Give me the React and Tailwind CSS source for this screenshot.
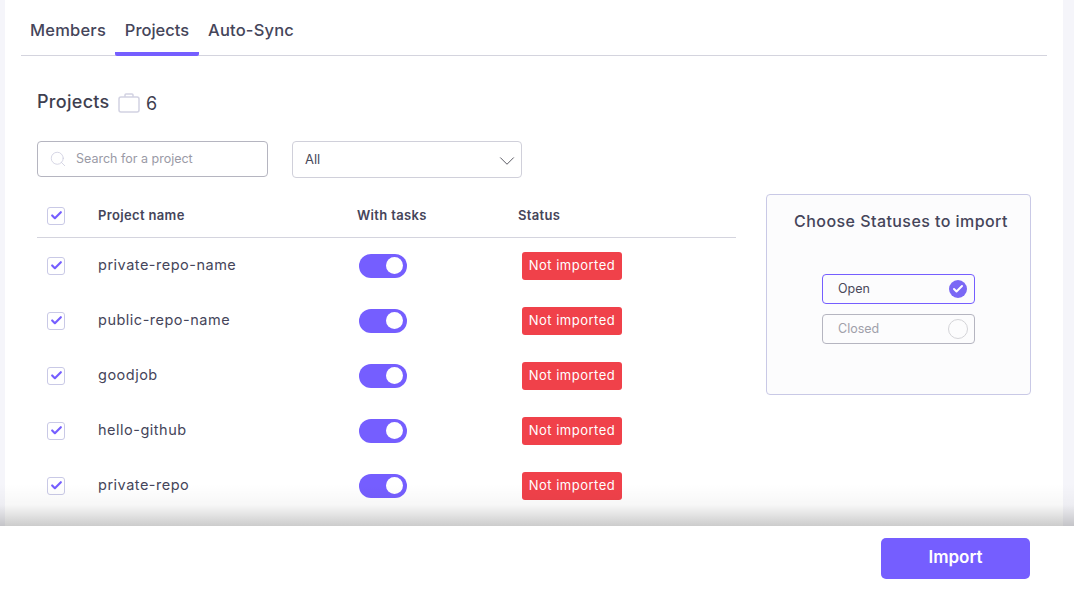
import React from 'react';
import { ChevronDown, Search, Check } from 'lucide-react';

const projects = ['private-repo-name', 'public-repo-name', 'goodjob', 'hello-github', 'private-repo'];

const CheckBox = () => (
    <div className="w-[18px] h-[18px] rounded-[3px] border border-[#c9c9e6] bg-white flex items-center justify-center">
        <Check size={13} strokeWidth={4} className="text-[#755eff]" />
    </div>
);

const Toggle = () => (
    <div className="w-12 h-6 rounded-full bg-[#755eff] flex items-center justify-end pr-1">
        <div className="w-[17px] h-[17px] rounded-full bg-white" />
    </div>
);

const StatusOption = ({ label, active }) => (
    <div className={`w-[153px] h-[30px] rounded-[4px] border flex items-center justify-between pl-[15px] pr-[6px] text-[12.5px] ${
        active ? 'border-[#755eff] text-[#4a4a5a]' : 'border-[#b5b5c0] text-[#a0a0aa]'
    }`}>
        <span>{label}</span>
        {active ? (
            <div className="w-[18px] h-[18px] rounded-full bg-[#7a68f5] flex items-center justify-center mr-[1px]">
                <Check size={12} strokeWidth={4} className="text-white" />
            </div>
        ) : (
            <div className="w-5 h-5 rounded-full border border-[#d4d4d8]" />
        )}
    </div>
);

const App = () => {
    return (
        <div className="w-[1074px] h-[590px] bg-white overflow-hidden flex flex-col font-['Inter',sans-serif] text-[#45455a]">
            <div className="relative h-[526px] flex-none bg-[#f5f5fa] px-[5px] overflow-hidden">
                <div className="bg-white h-[600px] w-[1058px] px-4">
                    <div className="h-[56px] border-b border-[#d4d4de] flex items-start text-[16.5px] font-medium tracking-[0.2px]">
                        <div className="w-[94px] pl-[9px] pt-[18px]">Members</div>
                        <div className="w-[84px] h-[56px] pt-[18px] text-center border-b-4 border-[#755eff] rounded-b-[2px] tracking-normal">Projects</div>
                        <div className="pl-[9px] pt-[18px]">Auto-Sync</div>
                    </div>

                    <div className="pl-4 pr-4">
                        <div className="flex items-center h-[28px] mt-[33px] text-[#3f3f50]">
                            <span className="text-[18px] font-medium w-[81px] tracking-[0.3px] pb-1">Projects</span>
                            <svg width="22" height="20" viewBox="0 0 22 20" fill="none" stroke="#d2d2e2" strokeWidth="1.5">
                                <rect x="1" y="4" width="20" height="15" rx="2" />
                                <path d="M7 4V2a1 1 0 0 1 1-1h6a1 1 0 0 1 1 1v2" />
                            </svg>
                            <span className="text-[18px] ml-[6px]">6</span>
                        </div>

                        <div className="flex gap-6 mt-6">
                            <div className="w-[231px] h-9 rounded-[4px] border border-[#b5b5c0] flex items-center pl-3 text-[12.5px] text-[#9a9aa6]">
                                <Search size={18} strokeWidth={1} className="text-[#c9c9dc] -ml-px mr-[9px]" />
                                <span>Search for a project</span>
                            </div>
                            <div className="w-[230px] h-[37px] rounded-[4px] border border-[#d0d0da] flex items-center justify-between pl-3 pr-px text-[13px] text-[#4a4a5a]">
                                <span>All</span>
                                <ChevronDown size={26} strokeWidth={0.9} className="text-[#55555f] mt-[3px]" />
                            </div>
                        </div>

                        <div className="flex items-start gap-[30px] mt-4">
                            <div className="w-[699px] flex-none">
                                <div className="h-[44px] flex items-center border-b border-[#d4d4de] text-[13px] font-semibold tracking-[0.35px]">
                                    <div className="w-[61px] pl-[10px]"><CheckBox /></div>
                                    <div className="w-[259px]">Project name</div>
                                    <div className="w-[161px]">With tasks</div>
                                    <div>Status</div>
                                </div>
                                {projects.map((name) => (
                                    <div key={name} className="h-[55px] flex items-center text-[14.5px] tracking-[0.5px]">
                                        <div className="w-[61px] pl-[10px]"><CheckBox /></div>
                                        <div className="w-[261px] pb-[2px]">{name}</div>
                                        <div className="w-[163px]"><Toggle /></div>
                                        <div className="w-[100px] h-7 rounded-[3px] bg-[#f0414a] text-white text-[13px] tracking-[0.5px] flex items-center justify-center">
                                            Not imported
                                        </div>
                                    </div>
                                ))}
                            </div>

                            <div className="w-[265px] h-[201px] flex-none rounded-[4px] border border-[#c9c9e6] bg-[#fcfcfd] flex flex-col items-center">
                                <div className="mt-[14px] pl-[5px] text-[16px] font-medium tracking-[0.44px]">Choose Statuses to import</div>
                                <div className="mt-[41px] flex flex-col gap-[10px]">
                                    <StatusOption label="Open" active />
                                    <StatusOption label="Closed" />
                                </div>
                            </div>
                        </div>
                    </div>
                </div>
                <div className="absolute left-0 right-0 bottom-0 h-[42px] bg-gradient-to-b from-[#00000000] via-[#00000008] via-50% to-[#00000033]" />
            </div>

            <div className="flex-1 flex justify-end pt-3 pr-[44px]">
                <button className="w-[149px] h-[41px] rounded-[5px] bg-[#755eff] text-white text-[17px] font-semibold pb-[2px]">
                    Import
                </button>
            </div>
        </div>
    );
};

export default App;
